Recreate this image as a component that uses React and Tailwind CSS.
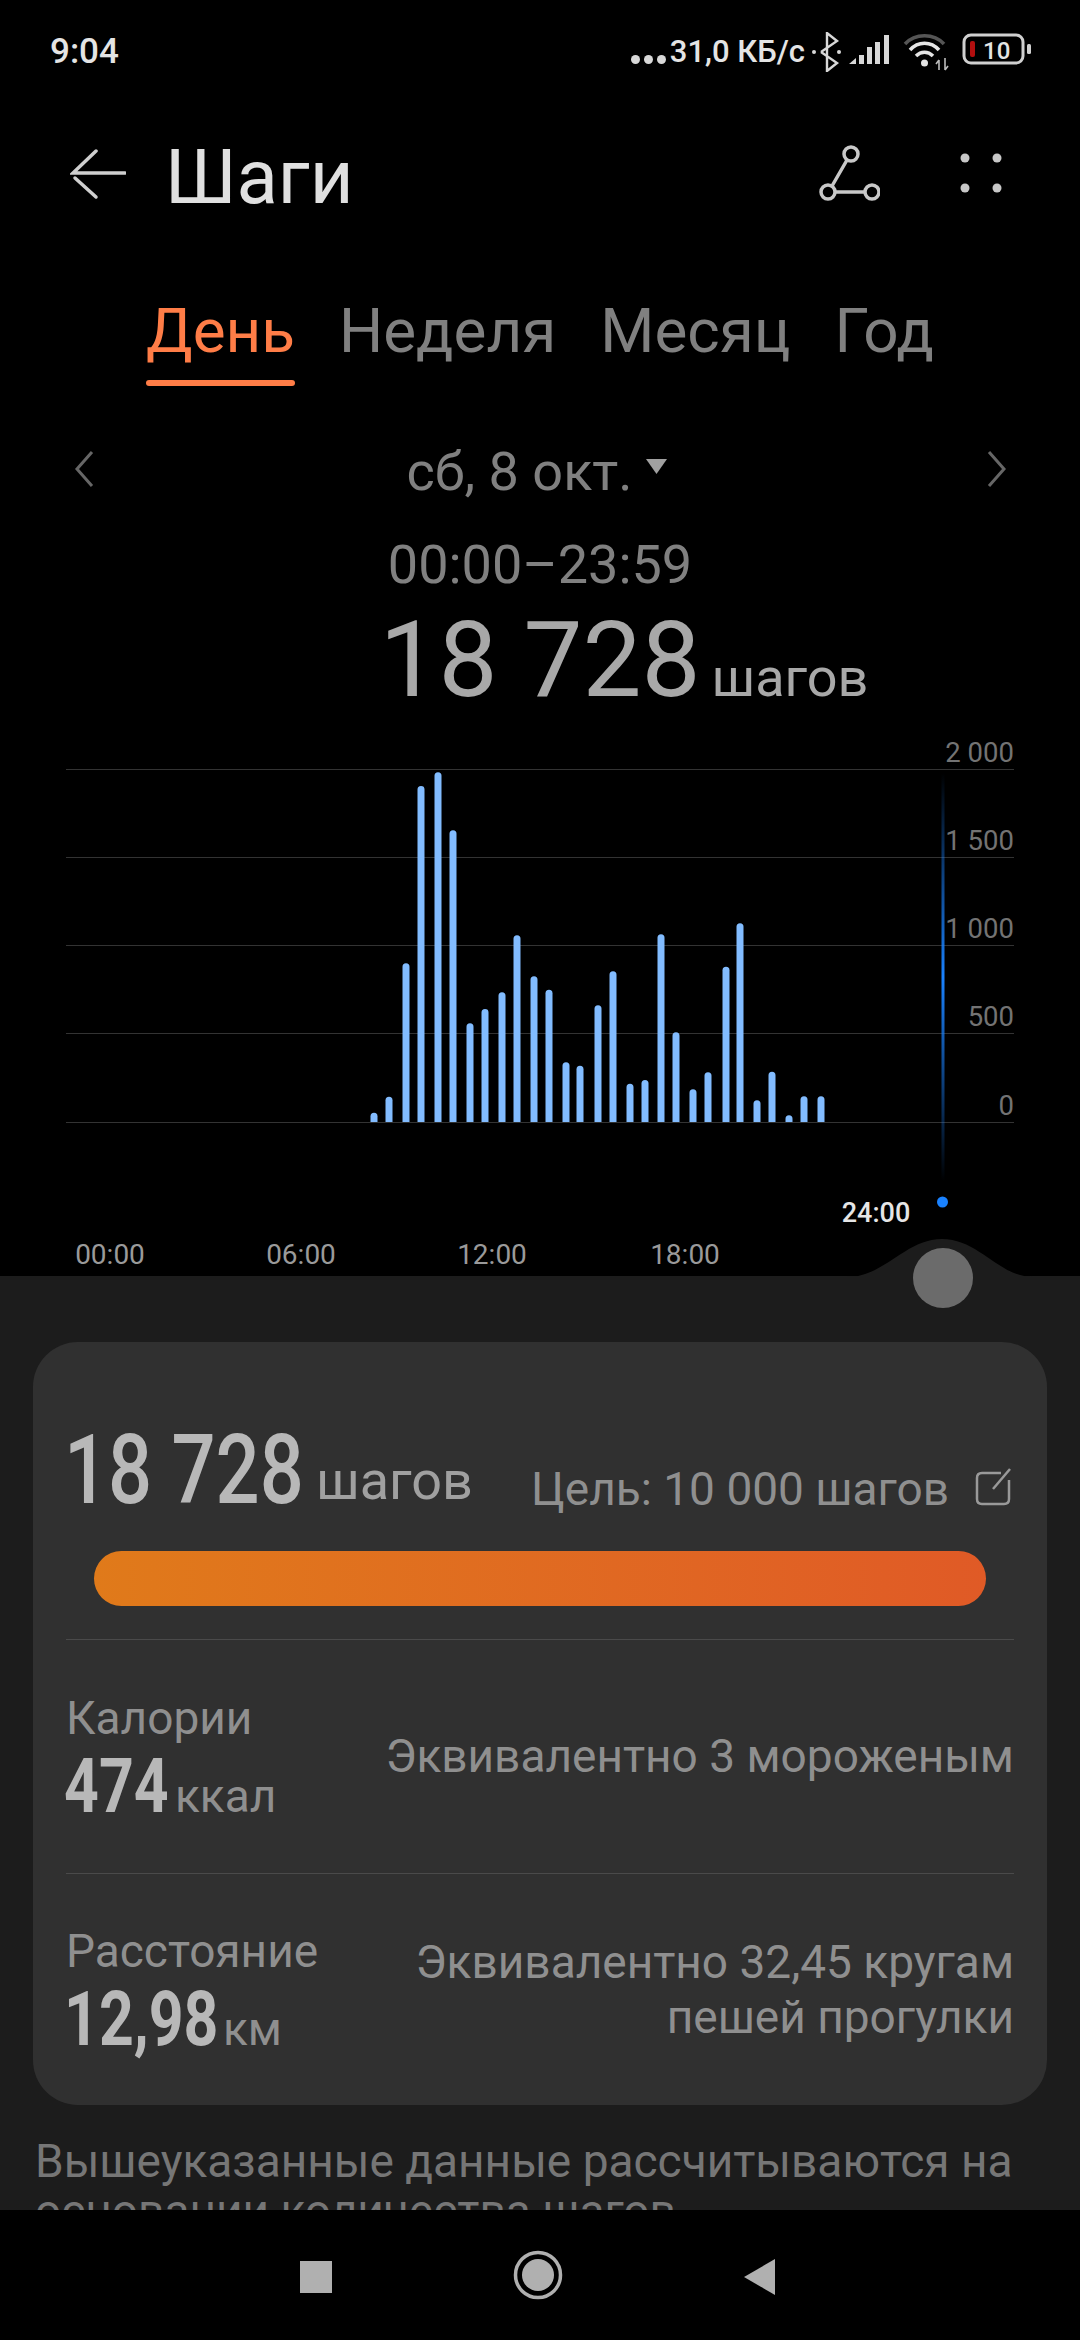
const BARS = [
  [374, 1118], [389, 1070], [406, 670], [421, 138], [438, 97], [453, 271], [470, 850], [485, 807],
  [502, 757], [517, 586], [534, 709], [549, 749], [566, 967], [580, 977], [598, 796], [613, 694],
  [630, 1031], [645, 1020], [661, 583], [676, 877], [693, 1048], [708, 997], [726, 680], [740, 550],
  [757, 1081], [772, 995], [789, 1126], [804, 1069], [821, 1069],
];

const GRID = [
  { y: 769, label: "2 000" },
  { y: 857, label: "1 500" },
  { y: 945, label: "1 000" },
  { y: 1033, label: "500" },
  { y: 1122, label: "0" },
];

const HOURS = [
  { x: 110, label: "00:00" },
  { x: 301, label: "06:00" },
  { x: 492, label: "12:00" },
  { x: 685, label: "18:00" },
];

function StatusBar() {
  return (
    <div className="h-[104px] flex items-center justify-between pl-[50px] pr-[45px] text-[#e4e4e4] font-medium">
      <span className="text-[35px] leading-[40px]">9:04</span>
      <div className="flex items-center">
        <div className="flex gap-[4px] mt-[14px] mr-[4px]">
          <i className="block w-[9px] h-[9px] rounded-full bg-[#d8d8d8]" />
          <i className="block w-[9px] h-[9px] rounded-full bg-[#d8d8d8]" />
          <i className="block w-[9px] h-[9px] rounded-full bg-[#d8d8d8]" />
        </div>
        <span className="text-[31px] leading-[40px] whitespace-nowrap">31,0 КБ/с</span>
        <svg width="226" height="40" viewBox="0 0 226 40" className="ml-[4px]" fill="none">
          {/* bluetooth */}
          <path d="M12 20 L28 9 L18 1 V39 L28 31 L12 20" stroke="#d8d8d8" strokeWidth="2.4" />
          <circle cx="5" cy="20" r="2" fill="#d8d8d8" />
          <circle cx="30" cy="20" r="2" fill="#d8d8d8" />
          {/* signal */}
          <path d="M40 32 L47 26 V32 Z" fill="#d8d8d8" />
          <rect x="50" y="23" width="5" height="9" fill="#d8d8d8" />
          <rect x="58" y="15" width="5" height="17" fill="#d8d8d8" />
          <rect x="66" y="10" width="5" height="22" fill="#d8d8d8" />
          <rect x="75" y="3" width="5" height="29" fill="#d8d8d8" />
          {/* wifi */}
          <path d="M96 12 C106 1 125 1 135 12" stroke="#555" strokeWidth="3.5" />
          <path d="M101 18 C109 9 122 9 130 18" stroke="#e4e4e4" strokeWidth="3.5" />
          <path d="M107 24 C112 19 119 19 124 24" stroke="#e4e4e4" strokeWidth="3.5" />
          <circle cx="115.500" cy="31" r="3.500" fill="#e4e4e4" />
          <path d="M130 28 V38 M127 32 L130 28 M136 26 V38 M136 38 L139 34" stroke="#bbb" strokeWidth="1.600" />
          {/* battery */}
          <rect x="155" y="3" width="59" height="28" rx="7" stroke="#d0d0d0" strokeWidth="3" />
          <rect x="161" y="9" width="5" height="16" rx="2" fill="#b30f0f" />
          <rect x="218" y="12" width="4" height="10" rx="1.500" fill="#d0d0d0" />
          <text x="174" y="27" fontSize="24" fill="#e4e4e4" fontFamily="Roboto, sans-serif">10</text>
        </svg>
      </div>
    </div>
  );
}

function Header() {
  return (
    <div className="h-[138px] flex items-center justify-between pl-[70px] pr-[78px]">
      <div className="flex items-center gap-[39px]">
        <svg width="56" height="52" viewBox="0 0 56 52" fill="none" stroke="#cfcfcf" strokeWidth="3.500" strokeLinecap="round" className="mt-[2px]">
          <path d="M26 3 L3 25 H55" />
          <path d="M5 30 L26 49" />
        </svg>
        <h1 className="pt-[8px] text-[76px] leading-[84px] text-[#e0e0e0] font-normal">Шаги</h1>
      </div>
      <div className="flex items-center gap-[80px]">
        <svg width="62" height="58" viewBox="0 0 62 58" fill="none" stroke="#c8c8c8" strokeWidth="3.500">
          <circle cx="33" cy="10" r="7" />
          <circle cx="10" cy="48" r="7" />
          <circle cx="54" cy="48" r="7" />
          <path d="M29 16 L14 42 M17 48 H47" />
        </svg>
        <svg width="42" height="40" viewBox="0 0 42 40" fill="#c8c8c8">
          <circle cx="5" cy="5" r="4.500" />
          <circle cx="37" cy="5" r="4.500" />
          <circle cx="5" cy="35" r="4.500" />
          <circle cx="37" cy="35" r="4.500" />
        </svg>
      </div>
    </div>
  );
}

function Tabs() {
  return (
    <div className="mt-[53px] flex justify-center gap-[44px] text-[62px] leading-[72px] text-[#808080]">
      <div className="flex flex-col">
        <span className="text-[#ff7d47]">День</span>
        <div className="mt-[13px] h-[6px] rounded-full bg-[#ff7d47]" />
      </div>
      <span>Неделя</span>
      <span>Месяц</span>
      <span>Год</span>
    </div>
  );
}

function DateRow() {
  return (
    <div className="mt-[55px] flex items-center justify-between pl-[74px] pr-[73px] text-[54px] leading-[62px] text-[#808080]">
      <svg width="20" height="36" viewBox="0 0 20 36" fill="none" stroke="#666" strokeWidth="3" className="mb-[7px]">
        <path d="M18 1 L3 18 L18 35" />
      </svg>
      <div className="flex items-center gap-[13px] pr-[8px]">
        <span>сб, 8 окт.</span>
        <svg width="21" height="15" viewBox="0 0 21 15" fill="#a0a0a0" className="mb-[12px]">
          <path d="M0 0 H21 L10.500 15 Z" />
        </svg>
      </div>
      <svg width="20" height="36" viewBox="0 0 20 36" fill="none" stroke="#666" strokeWidth="3" className="mb-[7px]">
        <path d="M2 1 L17 18 L2 35" />
      </svg>
    </div>
  );
}

function Bar({ x, top }) {
  const y = 740 + top / 3;
  return <path d={`M${x - 3.5} 1122 V${y + 3.5} A3.5 3.5 0 0 1 ${x + 3.5} ${y + 3.5} V1122 Z`} fill="#82bcff" />;
}

function Chart() {
  return (
    <svg width="1080" height="556" viewBox="0 720 1080 556" className="block font-['Roboto']">
      <defs>
        <linearGradient id="cursor" x1="0" y1="0" x2="0" y2="1">
          <stop offset="0" stopColor="#1a82ff" stopOpacity="0" />
          <stop offset="0.5" stopColor="#1a82ff" />
          <stop offset="1" stopColor="#1a82ff" stopOpacity="0" />
        </linearGradient>
      </defs>
      {GRID.map((g) => (
        <g key={g.y}>
          <line x1="66" x2="1014" y1={g.y + 0.5} y2={g.y + 0.5} stroke="#333" strokeWidth="1" />
          <text x="1014" y={g.y - 7} textAnchor="end" fontSize="27.500" fill="#737373">{g.label}</text>
        </g>
      ))}
      {BARS.map(([x, top]) => (
        <Bar key={x} x={x} top={top} />
      ))}
      <rect x="941.500" y="773" width="3" height="408" fill="url(#cursor)" />
      <circle cx="942.500" cy="1202" r="5.500" fill="#1a82ff" />
      <text x="876" y="1222" textAnchor="middle" fontSize="27" fontWeight="500" fill="#e6e6e6">24:00</text>
      {HOURS.map((h) => (
        <text key={h.x} x={h.x} y="1264" textAnchor="middle" fontSize="28" fill="#9a9a9a">{h.label}</text>
      ))}
    </svg>
  );
}

// цифры в карточке уже, чем Roboto, поэтому сжимаем по горизонтали
function Narrow({ width, className, children }) {
  return (
    <span className={`-ml-[2px] block shrink-0 origin-left scale-x-[0.8] whitespace-nowrap text-[#b8b8b8] ${width} ${className}`}>
      {children}
    </span>
  );
}

function StatRow({ title, value, valueWidth, unit, children, className }) {
  return (
    <div className={`flex items-center justify-between border-t border-[#4a4a4a] ${className}`}>
      <div className="pt-[5px]">
        <div className="text-[46px] leading-[50px] text-[#8f8f8f]">{title}</div>
        <div className="mt-[3px] flex items-baseline">
          <Narrow width={valueWidth} className="font-bold text-[76px] leading-[80px]">{value}</Narrow>
          <span className="ml-[11px] text-[46px] leading-[50px] text-[#8f8f8f]">{unit}</span>
        </div>
      </div>
      <div className="text-right text-[46px] leading-[55px] text-[#8f8f8f]">{children}</div>
    </div>
  );
}

function Card() {
  return (
    <div className="mx-[33px] mt-[66px] h-[763px] rounded-[45px] bg-[#303030] px-[33px]">
      <div className="pt-[78px] pb-[33px]">
        <div className="flex items-baseline">
          <Narrow width="w-[234px]" className="font-medium text-[97px] leading-[100px]">18 728</Narrow>
          <span className="ml-[18px] -translate-y-[4px] text-[54px] leading-[56px] text-[#a0a0a0]">шагов</span>
          <span className="ml-auto translate-y-[2px] text-[46px] leading-[50px] text-[#8f8f8f]">Цель: 10 000 шагов</span>
          <svg width="36" height="38" viewBox="0 0 36 38" fill="none" stroke="#999" strokeWidth="2.500" className="ml-[26px] mr-[3px] self-end mb-[14px]">
            <path d="M26 5 H7 Q2 5 2 10 V31 Q2 36 7 36 H29 Q34 36 34 31 V12" />
            <path d="M35 1 L18 21" />
          </svg>
        </div>
        <div className="mx-[28px] mt-[31px] h-[55px] rounded-full bg-gradient-to-r from-[#e07a1a] to-[#e05a26]" />
      </div>
      <StatRow title="Калории" value="474" valueWidth="w-[100px]" unit="ккал" className="h-[234px]">
        Эквивалентно 3 мороженым
      </StatRow>
      <StatRow title="Расстояние" value="12,98" valueWidth="w-[148px]" unit="км" className="h-[232px]">
        Эквивалентно 32,45 кругам
        <br />
        пешей прогулки
      </StatRow>
    </div>
  );
}

function NavBar() {
  return (
    <div className="h-[130px] shrink-0 bg-black flex items-center justify-center gap-[181px] pr-[4px]">
      <div className="mt-[4px] w-[32px] h-[32px] bg-[#b0b0b0]" />
      <svg width="50" height="50" viewBox="0 0 50 50">
        <circle cx="25" cy="25" r="22.500" fill="none" stroke="#b0b0b0" strokeWidth="3.500" />
        <circle cx="25" cy="25" r="16" fill="#b0b0b0" />
      </svg>
      <svg width="32" height="36" viewBox="0 0 32 36" className="mt-[4px]">
        <path d="M31 0 V36 L0 18 Z" fill="#b0b0b0" />
      </svg>
    </div>
  );
}

export default function App() {
  return (
    <div className="w-[1080px] h-[2340px] overflow-hidden flex flex-col bg-black font-['Roboto',sans-serif]">
      <StatusBar />
      <Header />
      <Tabs />
      <DateRow />
      <div className="mt-[30px] text-center text-[54px] leading-[64px] text-[#808080]">00:00–23:59</div>
      <div className="mt-[4px] grid grid-cols-[1fr_auto_1fr] items-baseline text-[#a8a8a8]">
        <span />
        <span className="text-[105px] leading-[119px]">18 728</span>
        <span className="ml-[11px] text-[54px] leading-[56px]">шагов</span>
      </div>
      <Chart />
      <div className="relative flex-1 min-h-0 bg-[#1c1c1c]">
        <svg width="186" height="38" viewBox="847 1239 186 38" className="absolute left-[847px] top-[-37px]">
          <path d="M847 1277 C885 1277 905 1239 942 1239 C979 1239 999 1277 1033 1277 Z" fill="#1c1c1c" />
        </svg>
        <div className="absolute left-[913px] top-[-28px] w-[60px] h-[60px] rounded-full bg-[#6b6b6b]" />
        <div className="h-full overflow-hidden">
          <Card />
          <p className="mx-[35px] mt-[31px] text-[46px] leading-[50px] text-[#767676]">
            Вышеуказанные данные рассчитываются на основании количества шагов.
          </p>
        </div>
      </div>
      <NavBar />
    </div>
  );
}
